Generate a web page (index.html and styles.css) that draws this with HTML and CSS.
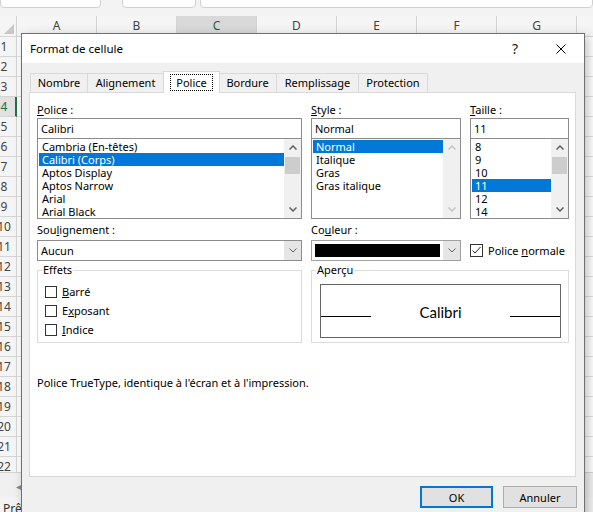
FILE: index.html
```html
<!DOCTYPE html>
<html lang="fr">
<head>
  <meta charset="UTF-8" />
  <title>Format de cellule</title>
  <link rel="stylesheet" href="styles.css">
</head>
<body>
  <div class="excel">
    <div class="fbar">
      <div class="namebox"></div>
      <div class="fbar-gap"></div>
      <div class="fx-box"></div>
      <div class="formula"></div>
    </div>
    <div class="colheads">
      <div class="corner"></div>
      <div class="ch">A</div>
      <div class="ch">B</div>
      <div class="ch ch-sel">C</div>
      <div class="ch">D</div>
      <div class="ch">E</div>
      <div class="ch">F</div>
      <div class="ch">G</div>
      <div class="ch"></div>
    </div>
    <div class="sheet">
      <div class="row"><div class="rh"><span>1</span></div><div class="cells"></div></div>
      <div class="row"><div class="rh"><span>2</span></div><div class="cells"></div></div>
      <div class="row"><div class="rh"><span>3</span></div><div class="cells"></div></div>
      <div class="row"><div class="rh rh-sel"><span>4</span></div><div class="cells"></div></div>
      <div class="row"><div class="rh"><span>5</span></div><div class="cells"></div></div>
      <div class="row"><div class="rh"><span>6</span></div><div class="cells"></div></div>
      <div class="row"><div class="rh"><span>7</span></div><div class="cells"></div></div>
      <div class="row"><div class="rh"><span>8</span></div><div class="cells"></div></div>
      <div class="row"><div class="rh"><span>9</span></div><div class="cells"></div></div>
      <div class="row"><div class="rh"><span>10</span></div><div class="cells"></div></div>
      <div class="row"><div class="rh"><span>11</span></div><div class="cells"></div></div>
      <div class="row"><div class="rh"><span>12</span></div><div class="cells"></div></div>
      <div class="row"><div class="rh"><span>13</span></div><div class="cells"></div></div>
      <div class="row"><div class="rh"><span>14</span></div><div class="cells"></div></div>
      <div class="row"><div class="rh"><span>15</span></div><div class="cells"></div></div>
      <div class="row"><div class="rh"><span>16</span></div><div class="cells"></div></div>
      <div class="row"><div class="rh"><span>17</span></div><div class="cells"></div></div>
      <div class="row"><div class="rh"><span>18</span></div><div class="cells"></div></div>
      <div class="row"><div class="rh"><span>19</span></div><div class="cells"></div></div>
      <div class="row"><div class="rh"><span>20</span></div><div class="cells"></div></div>
      <div class="row"><div class="rh"><span>21</span></div><div class="cells"></div></div>
      <div class="row"><div class="rh"><span>22</span></div><div class="cells"></div></div>
    </div>
    <div class="sheetbar"><span>&#9666;</span></div>
    <div class="status">Prêt</div>

    <!-- Format de cellule dialog, floating over the sheet -->
    <div class="dialog">
      <div class="titlebar">
        <span class="title">Format de cellule</span>
        <span class="tb-btn help">?</span>
        <span class="tb-btn">
          <svg width="10" height="10" viewBox="0 0 10 10"><path d="M0.5 0.5L9.5 9.5M9.5 0.5L0.5 9.5" stroke="#000" stroke-width="1" fill="none"/></svg>
        </span>
      </div>

      <div class="dlg-body">
        <div class="tabs">
          <div class="tab t-nombre">Nombre</div>
          <div class="tab t-align">Alignement</div>
          <div class="tab t-police active"><span class="focus">Police</span></div>
          <div class="tab t-bordure">Bordure</div>
          <div class="tab t-rempl">Remplissage</div>
          <div class="tab t-protect">Protection</div>
        </div>

        <div class="panel">
          <div class="font-grid">
            <div class="field">
              <div class="lbl"><u>P</u>olice :</div>
              <div class="text-input">Calibri</div>
              <div class="listbox">
                <div class="items">
                  <div class="item">Cambria (En-têtes)</div>
                  <div class="item sel">Calibri (Corps)</div>
                  <div class="item">Aptos Display</div>
                  <div class="item">Aptos Narrow</div>
                  <div class="item">Arial</div>
                  <div class="item">Arial Black</div>
                </div>
                <div class="vscroll">
                  <div class="sb-btn"><svg width="8" height="5" viewBox="0 0 8 5"><polyline points="0.5,4.5 4,1 7.5,4.5" fill="none" stroke="#606060" stroke-width="1.5"/></svg></div>
                  <div class="sb-thumb"></div>
                  <div class="sb-track"></div>
                  <div class="sb-btn"><svg width="8" height="5" viewBox="0 0 8 5"><polyline points="0.5,0.5 4,4 7.5,0.5" fill="none" stroke="#606060" stroke-width="1.5"/></svg></div>
                </div>
              </div>
            </div>

            <div class="field">
              <div class="lbl"><u>S</u>tyle :</div>
              <div class="text-input">Normal</div>
              <div class="listbox">
                <div class="items">
                  <div class="item sel">Normal</div>
                  <div class="item">Italique</div>
                  <div class="item">Gras</div>
                  <div class="item">Gras italique</div>
                </div>
                <div class="vscroll disabled">
                  <div class="sb-btn"><svg width="8" height="5" viewBox="0 0 8 5"><polyline points="0.5,4.5 4,1 7.5,4.5" fill="none" stroke="#c4c4c4" stroke-width="1.5"/></svg></div>
                  <div class="sb-track"></div>
                  <div class="sb-btn"><svg width="8" height="5" viewBox="0 0 8 5"><polyline points="0.5,0.5 4,4 7.5,0.5" fill="none" stroke="#c4c4c4" stroke-width="1.5"/></svg></div>
                </div>
              </div>
            </div>

            <div class="field">
              <div class="lbl"><u>T</u>aille :</div>
              <div class="text-input">11</div>
              <div class="listbox">
                <div class="items">
                  <div class="item">8</div>
                  <div class="item">9</div>
                  <div class="item">10</div>
                  <div class="item sel">11</div>
                  <div class="item">12</div>
                  <div class="item">14</div>
                </div>
                <div class="vscroll">
                  <div class="sb-btn"><svg width="8" height="5" viewBox="0 0 8 5"><polyline points="0.5,4.5 4,1 7.5,4.5" fill="none" stroke="#606060" stroke-width="1.5"/></svg></div>
                  <div class="sb-thumb"></div>
                  <div class="sb-track"></div>
                  <div class="sb-btn"><svg width="8" height="5" viewBox="0 0 8 5"><polyline points="0.5,0.5 4,4 7.5,0.5" fill="none" stroke="#606060" stroke-width="1.5"/></svg></div>
                </div>
              </div>
            </div>

            <div class="field row2">
              <div class="lbl">Sou<u>l</u>ignement :</div>
              <div class="combo">
                <div class="combo-val">Aucun</div>
                <div class="dd-btn"><svg width="8" height="5" viewBox="0 0 8 5"><polyline points="0.5,0.5 4,4 7.5,0.5" fill="none" stroke="#606060" stroke-width="1"/></svg></div>
              </div>
            </div>

            <div class="field row2">
              <div class="lbl">Co<u>u</u>leur :</div>
              <div class="combo color">
                <div class="combo-val"><div class="swatch"></div></div>
                <div class="dd-btn"><svg width="8" height="5" viewBox="0 0 8 5"><polyline points="0.5,0.5 4,4 7.5,0.5" fill="none" stroke="#606060" stroke-width="1"/></svg></div>
              </div>
            </div>

            <div class="check normal-check">
              <span class="box"><svg width="11" height="11" viewBox="0 0 11 11"><polyline points="1.5,5.5 4,8 9.5,2" fill="none" stroke="#222" stroke-width="1"/></svg></span>
              <span>Police <u>n</u>ormale</span>
            </div>

            <fieldset class="group">
              <legend>Effets</legend>
              <div class="check"><span class="box"></span><span><u>B</u>arré</span></div>
              <div class="check"><span class="box"></span><span>E<u>x</u>posant</span></div>
              <div class="check"><span class="box"></span><span><u>I</u>ndice</span></div>
            </fieldset>

            <fieldset class="group preview-group">
              <legend>Aperçu</legend>
              <div class="preview">
                <div class="pv-line"></div>
                <div class="pv-text">Calibri</div>
                <div class="pv-line"></div>
              </div>
            </fieldset>
          </div>

          <p class="note">Police TrueType, identique à l'écran et à l'impression.</p>
        </div>

        <div class="buttons">
          <button class="btn default">OK</button>
          <button class="btn">Annuler</button>
        </div>
      </div>
    </div>
  </div>
</body>
</html>
```

FILE: styles.css
```css
* {
  box-sizing: border-box;
}
body {
  margin: 0;
  background: #fff;
  font-family: "Noto Sans", sans-serif;
}
.excel {
  position: relative;
  width: 593px;
  height: 512px;
  overflow: hidden;
  background: #f3f3f3;
}

/* formula bar, only its bottom edge is visible */
.fbar {
  display: flex;
  height: 16px;
}
.fbar > div {
  height: 14px;
  margin-top: -6px;
  background: #fff;
  border: 1px solid #d0d0d0;
  border-radius: 4px;
}
.namebox { width: 101px; }
.fbar .fbar-gap { width: 21px; background: none; border: none; }
.fx-box { width: 74px; }
.formula { flex: 1; margin-left: 4px; }

.colheads {
  display: flex;
  height: 21px;
  border-bottom: 1px solid #d4d4d4;
  background: #f5f5f5;
}
.corner {
  width: 17px;
  flex: none;
  border-right: 1px solid #d4d4d4;
  position: relative;
}
.corner::after {
  content: "";
  position: absolute;
  right: 2px;
  bottom: 2px;
  border-left: 10px solid transparent;
  border-bottom: 10px solid #c8c8c8;
}
.ch {
  width: 80px;
  flex: none;
  border-right: 1px solid #d4d4d4;
  text-align: center;
  font-size: 12px;
  line-height: 20px;
  color: #444;
}
.ch-sel {
  background: #d9d9d9;
  color: #1e5e3a;
}

.sheet {
  height: 435px;
  overflow: hidden;
  background: #fff;
}
.row {
  display: flex;
  height: 20px;
}
.rh {
  width: 17px;
  flex: none;
  background: #f5f5f5;
  border-right: 1px solid #d4d4d4;
  border-bottom: 1px solid #d4d4d4;
  overflow: hidden;
  font-size: 12px;
  line-height: 19px;
  color: #444;
}
.rh span {
  display: block;
  width: 26px;
  margin-left: -9px;
  text-align: center;
}
.rh-sel {
  background: #e1e1e1;
  color: #1e6e42;
  border-right: 2px solid #217346;
}
.cells {
  flex: 1;
  border-bottom: 1px solid #e1e1e1;
  background-image: repeating-linear-gradient(to right, transparent 0 79px, #e1e1e1 79px 80px);
}
.sheetbar {
  height: 25px;
  background: #f0f0f0;
  border-top: 1px solid #d4d4d4;
  font-size: 10px;
  color: #888;
  padding: 6px 0 0 16px;
}
.status {
  height: 15px;
  font-size: 12px;
  color: #333;
  padding-left: 3px;
  line-height: 24px;
}

/* dialog */
.dialog {
  position: absolute;
  left: 21px;
  top: 33px;
  width: 564px;
  height: 500px;
  border: 1px solid #707070;
  background: #f0f0f0;
  box-shadow: 3px 3px 10px rgba(0, 0, 0, 0.25);
  font-size: 11px;
  color: #000;
}
.titlebar {
  display: flex;
  align-items: center;
  height: 29px;
  background: #fff;
}
.title {
  flex: 1;
  padding-left: 8px;
  font-size: 11.5px;
}
.tb-btn {
  width: 46px;
  height: 29px;
  display: flex;
  align-items: center;
  justify-content: center;
}
.help {
  font-size: 14px;
  color: #222;
}
.dlg-body {
  padding: 8px 8px 0 7px;
}

.tabs {
  display: flex;
  align-items: flex-end;
  height: 22px;
  margin-bottom: -1px;
}
.tab {
  height: 20px;
  border: 1px solid #d9d9d9;
  border-bottom: 0;
  margin-left: -1px;
  text-align: center;
  line-height: 18px;
  white-space: nowrap;
}
.t-nombre { width: 58px; margin-left: 1px; }
.t-align { width: 77px; }
.t-police { width: 57px; }
.t-bordure { width: 59px; }
.t-rempl { width: 83px; }
.t-protect { width: 70px; }
.tab.active {
  position: relative;
  z-index: 1;
  height: 22px;
  background: #fff;
  margin-right: -1px;
  padding-top: 2px;
}
.focus {
  display: inline-block;
  outline: 1px dotted #000;
  padding: 0 5px;
  line-height: 15px;
}

.panel {
  height: 385px;
  background: #fff;
  border: 1px solid #d9d9d9;
  padding: 10px 6px 0 7px;
}
.font-grid {
  display: grid;
  grid-template-columns: 265px 150px 99px;
  column-gap: 9px;
}
.field {
  display: flex;
  flex-direction: column;
}
.lbl {
  line-height: 14px;
  margin-bottom: 1px;
}
.row2 {
  margin-top: 4px;
}
.row2 .lbl {
  margin-bottom: 3px;
}
.text-input {
  height: 21px;
  border: 1px solid #8c8c8c;
  padding: 0 3px;
  line-height: 19px;
}
.listbox {
  display: flex;
  height: 80px;
  border: 1px solid #8c8c8c;
  border-top: 0;
}
.items {
  flex: 1;
  padding: 1px 0 0 1px;
}
.item {
  height: 13px;
  line-height: 13px;
  padding-left: 3px;
  white-space: nowrap;
}
.item.sel {
  background: #0078d7;
  color: #fff;
}
.vscroll {
  width: 17px;
  display: flex;
  flex-direction: column;
  background: #f0f0f0;
}
.sb-btn {
  height: 17px;
  display: flex;
  align-items: center;
  justify-content: center;
}
.sb-thumb {
  height: 17px;
  margin: 1px 1px 0;
  background: #cdcdcd;
}
.sb-track {
  flex: 1;
}

.combo {
  display: flex;
  height: 21px;
  border: 1px solid #8c8c8c;
}
.combo-val {
  flex: 1;
  padding: 0 3px;
  line-height: 19px;
}
.dd-btn {
  width: 17px;
  background: #e5e5e5;
  display: flex;
  align-items: center;
  justify-content: center;
}
.combo.color {
  border-color: #a0a0a0;
}
.combo.color .combo-val {
  padding: 3px;
}
.swatch {
  height: 13px;
  background: #000;
}

.check {
  display: flex;
  align-items: center;
  gap: 5px;
  height: 19px;
  white-space: nowrap;
}
.box {
  width: 12px;
  height: 12px;
  border: 1px solid #333;
  background: #fff;
  flex: none;
  display: flex;
  align-items: center;
  justify-content: center;
}
.normal-check {
  align-self: end;
  height: 21px;
  margin-top: 4px;
}
.normal-check .box {
  width: 13px;
  height: 13px;
}

.group {
  margin: 2px 0 0;
  height: 80px;
  min-width: 0;
  border: 1px solid #dcdcdc;
  padding: 5px 8px 0;
}
.group legend {
  padding: 0 1px;
  margin-left: -4px;
  line-height: 14px;
}
.group .check {
  margin-left: -1px;
}
.preview-group {
  grid-column: 2 / 4;
  padding-right: 7px;
}
.preview {
  display: flex;
  align-items: flex-start;
  height: 54px;
  margin-top: 2px;
  border: 1px solid #646464;
}
.pv-line {
  width: 50px;
  height: 1px;
  margin-top: 31px;
  background: #000;
}
.pv-text {
  flex: 1;
  text-align: center;
  margin-top: 18px;
  line-height: 18px;
  font-family: Lato, sans-serif;
  font-size: 15px;
}

.note {
  margin: 33px 0 0;
  line-height: 14px;
}

.buttons {
  display: flex;
  justify-content: flex-end;
  gap: 10px;
  margin: 9px -1px 0 0;
}
.btn {
  width: 74px;
  height: 22px;
  font: inherit;
  color: #000;
  background: #e1e1e1;
  border: 1px solid #adadad;
  padding: 0;
}
.btn.default {
  width: 73px;
  border: 2px solid #0078d7;
}
```
